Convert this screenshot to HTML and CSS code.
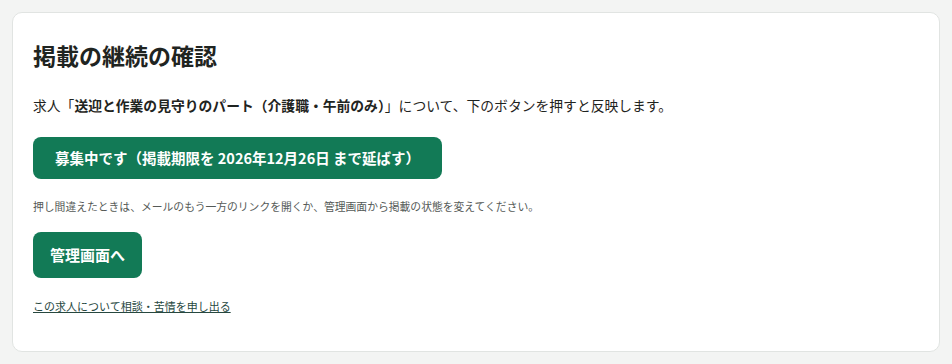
FILE: index.html
```html
<!DOCTYPE html>
<html lang="ja">
<head>
  <meta charset="UTF-8" />
  <meta name="viewport" content="width=device-width, initial-scale=1.0"/>
  <title>掲載の継続の確認</title>
  <link rel="stylesheet" href="styles.css">
</head>
<body>

<div class="card">
  <h1>掲載の継続の確認</h1>
  <p class="lead">求人「<strong>送迎と作業の見守りのパート（介護職・午前のみ）</strong>」について、下のボタンを押すと反映します。</p>
  <a class="btn btn-main" href="#">募集中です（掲載期限を 2026年12月26日 まで延ばす）</a>
  <p class="note">押し間違えたときは、メールのもう一方のリンクを開くか、管理画面から掲載の状態を変えてください。</p>
  <a class="btn btn-admin" href="#">管理画面へ</a>
  <a class="report" href="#">この求人について相談・苦情を申し出る</a>
</div>

</body>
</html>
```

FILE: styles.css
```css
body {
  margin: 12px;
  font-family: "Noto Sans CJK JP", "Noto Sans", sans-serif;
  background: #f3f4f3;
  color: #1f2421;
}

.card {
  background: #fff;
  border: 1px solid #e1e4e2;
  border-radius: 10px;
  padding: 27px 20px 36px;
  display: flex;
  flex-direction: column;
  align-items: flex-start;
}

h1 {
  margin: 0;
  font-size: 23px;
  line-height: 30px;
  font-weight: bold;
}

.lead {
  margin: 24px 0 0;
  font-size: 13.8px;
  line-height: 22px;
}

.lead strong {
  font-weight: bold;
}

.btn {
  display: block;
  background: #127a56;
  color: #fff;
  text-decoration: none;
  font-weight: bold;
  line-height: 22px;
  border-radius: 8px;
}

.btn-main {
  margin-top: 21px;
  padding: 10px 22px;
  font-size: 14.5px;
}

.btn-admin {
  margin-top: 17px;
  padding: 12px 17px;
  font-size: 15px;
}

.note {
  margin: 18px 0 0;
  font-size: 10.8px;
  line-height: 18px;
  color: #555a57;
}

.report {
  margin-top: 19px;
  font-size: 11px;
  line-height: 18px;
  color: #27483f;
  text-decoration: underline;
}
```
